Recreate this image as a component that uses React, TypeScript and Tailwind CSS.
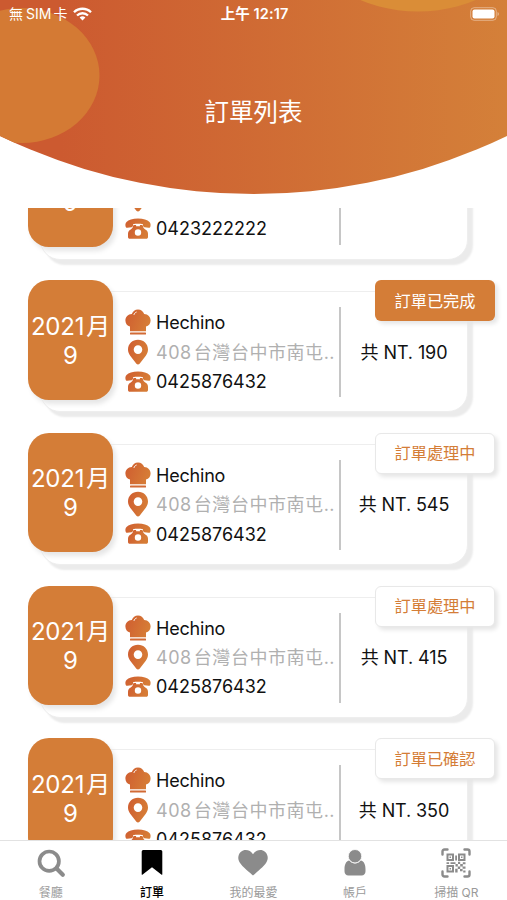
import React from "react";

type Order = { name: string; phone: string; price: string; status: string; done?: boolean };

const orders: Order[] = [
  { name: "Hechino", phone: "0423222222", price: "190", status: "訂單處理中" },
  { name: "Hechino", phone: "0425876432", price: "190", status: "訂單已完成", done: true },
  { name: "Hechino", phone: "0425876432", price: "545", status: "訂單處理中" },
  { name: "Hechino", phone: "0425876432", price: "415", status: "訂單處理中" },
  { name: "Hechino", phone: "0425876432", price: "350", status: "訂單已確認" },
];

function ChefHat() {
  return (
    <svg width="26" height="26" viewBox="0 0 26 26" className="mb-[2px] block">
      <path
        fill="url(#warm)"
        d="M5 22.300V17.600C2.200 17 .4 14.600.4 11.600.4 8 3 5 6.800 5 7.800 2.200 10 .4 13 .4s5.200 1.800 6.200 4.600c3.800 0 6.400 3 6.400 6.600 0 3-1.800 5.400-4.600 6v4.700z"
      />
      <rect x="5" y="23.500" width="16" height="2" rx=".5" fill="#d26a35" />
      <path d="M9 5.600c.4-1.300 1.200-2.100 2.300-2.500" stroke="#fff" strokeWidth=".9" fill="none" strokeLinecap="round" />
    </svg>
  );
}

function Pin() {
  return (
    <svg width="26" height="26" viewBox="0 0 26 26" className="mb-[2px] block">
      <path
        fill="url(#warm)"
        fillRule="evenodd"
        d="M13 .8C7.400.8 3 5 3 10.400c0 2.400.9 4.300 2.200 6.300l6.200 8.100c.8 1 2.400 1 3.200 0l6.200-8.100c1.300-2 2.200-3.900 2.200-6.300C23 5 18.600.8 13 .8zm0 5.500a4.300 4.300 0 1 1 0 8.600 4.300 4.300 0 0 1 0-8.600z"
      />
    </svg>
  );
}

function Phone() {
  return (
    <svg width="26" height="26" viewBox="0 0 26 26" className="mb-[1px] block">
      <path
        fill="url(#warm)"
        d="M13 2.600C7.500 2.600 3.600 3.800 1.500 6.100.3 7.400.2 9 .6 10.600c.2.900.8 1.300 1.700 1.200l4.200-.6c.9-.1 1.500-.7 1.500-1.600V8.300C9.400 7.900 11.100 7.800 13 7.800s3.600.1 5 .5v1.300c0 .9.6 1.500 1.500 1.600l4.200.6c.9.100 1.500-.3 1.700-1.200.4-1.600.3-3.200-.9-4.500C22.400 3.800 18.500 2.600 13 2.600z"
      />
      <path
        fill="url(#warm)"
        fillRule="evenodd"
        d="M9.600 8.900h1.500v1.400h3.800V8.900h1.500c1 0 1.500.5 1.600 1.400.2 1.500.9 2.300 2.300 3.100 1.800 1.100 2.700 2.400 2.700 4.400v3.200c0 1.100-.7 1.800-1.800 1.800H4.800c-1.100 0-1.800-.7-1.800-1.800v-3.200c0-2 .9-3.300 2.700-4.400 1.400-.8 2.100-1.600 2.300-3.100.1-.9.600-1.400 1.600-1.400zM13 13.300a3.200 3.200 0 1 0 0 6.400 3.200 3.200 0 0 0 0-6.400z"
      />
    </svg>
  );
}

function OrderRow({ order }: { order: Order }) {
  return (
    <li className="relative h-[152.700px] shrink-0 pt-[11px] pl-[40px]">
      <div className="flex h-[121px] w-[428px] rounded-[20px] border border-[#eeeeee] bg-white shadow-[5px_5px_2px_#ebebeb]">
        <div className="ml-[84px] flex w-[214px] flex-col pt-[16.300px]">
          <div className="flex h-[29.400px] items-center gap-[5px]">
            <ChefHat />
            <span className="text-[18px] leading-none tracking-[-0.200px] text-[#111]">{order.name}</span>
          </div>
          <div className="flex h-[29.400px] items-center gap-[5px]">
            <Pin />
            <span className="whitespace-nowrap text-[18px] leading-none tracking-[0.550px] text-[#b0b0b0]">
              408<span className="ml-[2px]">台灣台中市南屯..</span>
            </span>
          </div>
          <div className="flex h-[29.400px] items-center gap-[5px]">
            <Phone />
            <span className="text-[18px] leading-none text-[#111]">{order.phone}</span>
          </div>
        </div>
        <div className="mt-[15px] h-[90px] w-[2px] bg-[#c6c6c6]" />
        <div className="flex flex-1 items-center justify-center pt-[2px]">
          <span className="whitespace-nowrap text-[18px] leading-none tracking-[-0.100px] text-[#111]">
            共 NT. {order.price}
          </span>
        </div>
      </div>
      <div className="absolute top-0 left-[28px] flex h-[119.500px] w-[85px] flex-col items-center justify-center rounded-[21px] bg-[#d47d37] pt-px text-[24px] leading-[29px] text-white shadow-[3px_4px_5px_#e6e6e6]">
        <span className="whitespace-nowrap tracking-[-0.200px]">
          2021<span className="ml-[2px]">月</span>
        </span>
        <span>9</span>
      </div>
      <div
        className={
          order.done
            ? "absolute top-0 left-[375px] flex h-[41px] w-[120px] items-center justify-center rounded-[6px] bg-[#d47d37] text-[16.200px] text-white shadow-[3px_3px_4px_#e6e6e6]"
            : "absolute top-0 left-[375px] flex h-[41px] w-[120px] items-center justify-center rounded-[6px] border border-[#e8e8e8] bg-white text-[16.200px] text-[#d47d37] shadow-[3px_3px_4px_#e6e6e6]"
        }
      >
        {order.status}
      </div>
    </li>
  );
}

function SearchIcon() {
  return (
    <svg width="30" height="30" viewBox="0 0 30 30" fill="none" stroke="#8b8b8b" strokeLinecap="round">
      <circle cx="13.200" cy="13.200" r="9.700" strokeWidth="3.700" />
      <path d="M20.800 20.800l6 6" strokeWidth="4.200" />
    </svg>
  );
}

function BookmarkIcon() {
  return (
    <svg width="30" height="30" viewBox="0 0 30 30">
      <path d="M6.200 2h17.600q1.500 0 1.500 1.500V26.200q0 1-1 .4L15 19.300 5.700 26.600q-1 .6-1-.4V3.500Q4.700 2 6.200 2z" fill="#000" />
    </svg>
  );
}

function HeartIcon() {
  return (
    <svg width="30" height="30" viewBox="0 0 30 30">
      <path
        d="M15 27.500C12.700 25.500 4 18.500 1.700 14.600.3 12.200 0 10 .5 7.900 1.300 4.500 4.200 2 7.700 2c3 0 5.700 1.600 7.300 4.200C16.600 3.600 19.300 2 22.300 2c3.500 0 6.400 2.500 7.200 5.900.5 2.100.2 4.300-1.200 6.700C26 18.500 17.300 25.500 15 27.500z"
        fill="#8b8b8b"
      />
    </svg>
  );
}

function PersonIcon() {
  return (
    <svg width="30" height="30" viewBox="0 0 30 30" fill="#8b8b8b">
      <path d="M9.300 12.600c1.500 1.900 3.500 2.900 5.700 2.900s4.200-1 5.700-2.900c3.400.6 4.800 4.200 4.800 8.800v1.800c0 2.500-1.500 4.200-4 4.200h-13c-2.500 0-4-1.700-4-4.200v-1.800c0-4.600 1.400-8.200 4.800-8.800z" />
      <circle cx="15" cy="8.200" r="6.700" stroke="#fff" strokeWidth=".8" />
    </svg>
  );
}

function QrScanIcon() {
  return (
    <svg width="30" height="30" viewBox="0 0 30 30" fill="none" stroke="#8b8b8b">
      <g strokeWidth="2.400" strokeLinecap="round">
        <path d="M1.500 6.500v-3q0-2 2-2h3" />
        <path d="M23.500 1.500h3q2 0 2 2v3" />
        <path d="M28.500 23.500v3q0 2-2 2h-3" />
        <path d="M6.500 28.500h-3q-2 0-2-2v-3" />
      </g>
      <g strokeWidth="2">
        <rect x="6.500" y="6.500" width="5.500" height="5.500" />
        <rect x="18" y="6.500" width="5.500" height="5.500" />
        <rect x="6.500" y="18" width="5.500" height="5.500" />
      </g>
      <g fill="#8b8b8b" stroke="none">
        <path d="M8.500 8.500H10V10H8.500zM20 8.500h1.500V10H20zM8.500 20H10v1.500H8.500z" />
        <path d="M14.200 7.500h1.800v5h-1.800zM5.500 14.200h2.600V16H5.500zM9.500 14.200h5v1.800h-5zM14.500 16h2.300v2.400h-2.300zM17 13.800h2.200v2.200H17zM21.800 14.200h2.700v2h-2.700zM19.200 16h2.600v2.600h-2.600zM16.800 18.600h2.400v2.300h-2.400zM14.200 20.800h2.400v3.700h-2.400zM21.600 18.600h2.900v2.200h-2.900zM19 21h2.600v2.200H19zM22.200 22.500h2.300v2h-2.300z" />
      </g>
    </svg>
  );
}

const tabs = [
  { label: "餐廳", icon: <SearchIcon /> },
  { label: "訂單", icon: <BookmarkIcon />, active: true },
  { label: "我的最愛", icon: <HeartIcon /> },
  { label: "帳戶", icon: <PersonIcon /> },
  { label: "掃描 QR", icon: <QrScanIcon /> },
];

export default function App() {
  return (
    <div className="flex h-[900px] w-[507px] flex-col overflow-hidden bg-white font-[Inter,'Noto_Sans_CJK_TC',sans-serif]">
      <svg width="0" height="0" className="absolute">
        <defs>
          <linearGradient id="warm" x1="0" y1="0" x2="1" y2="0.300">
            <stop offset="0" stopColor="#cf5c30" />
            <stop offset="1" stopColor="#d67c36" />
          </linearGradient>
        </defs>
      </svg>

      <header className="relative h-[208px] shrink-0 text-white">
        <svg width="507" height="208" viewBox="0 0 507 208" className="absolute inset-0">
          <defs>
            <linearGradient id="sky" gradientUnits="userSpaceOnUse" x1="60" y1="0" x2="507" y2="0">
              <stop offset="0" stopColor="#cc5a30" />
              <stop offset="1" stopColor="#d48039" />
            </linearGradient>
            <clipPath id="dome">
              <circle cx="253.500" cy="-389" r="583" />
            </clipPath>
          </defs>
          <g clipPath="url(#dome)">
            <rect width="507" height="208" fill="url(#sky)" />
            <ellipse cx="22" cy="75.500" rx="77.500" ry="67.500" fill="#d47a34" />
            <ellipse cx="418" cy="-56" rx="104" ry="67.500" fill="#da8d37" />
          </g>
        </svg>
        <div className="relative grid h-[28px] grid-cols-3 items-center pr-[7px] pl-[9px] text-[14px] leading-none">
          <div className="flex items-center gap-[6px]">
            <span className="whitespace-nowrap">
              無<span className="mr-[2px] ml-[3px]">SIM</span>卡
            </span>
            <svg width="19" height="14" viewBox="0 0 19 14" fill="none" stroke="#fff" strokeWidth="2.300">
              <path d="M1 5.200a12.200 12.200 0 0 1 17 0" />
              <path d="M4 8.500a7.900 7.900 0 0 1 11 0" />
              <path d="M9.500 13.600l-2.900-3a4.200 4.200 0 0 1 5.800 0z" fill="#fff" stroke="none" />
            </svg>
          </div>
          <div className="text-center text-[14.500px] font-semibold tracking-[0.100px]">上午 12:17</div>
          <div className="flex justify-end">
            <svg width="30" height="14" viewBox="0 0 30 14">
              <rect x=".7" y=".7" width="25.600" height="12.600" rx="3.500" fill="none" stroke="#fff" strokeOpacity=".4" />
              <rect x="2.500" y="2.500" width="22" height="9" rx="2" fill="#fff" />
              <path d="M27.500 5v4q1.500-.5 1.500-2t-1.500-2z" fill="#fff" fillOpacity=".4" />
            </svg>
          </div>
        </div>
        <h1 className="relative pt-[66px] text-center text-[24.500px] leading-[36px]">訂單列表</h1>
      </header>

      <main className="min-h-0 flex-1 overflow-hidden">
        <ul className="-mt-[80.400px] flex flex-col">
          {orders.map((o, i) => (
            <OrderRow key={i} order={o} />
          ))}
        </ul>
      </main>

      <nav className="grid h-[60px] shrink-0 grid-cols-5 border-t border-[#e2e2e2] bg-white">
        {tabs.map((t) => (
          <div key={t.label} className="flex flex-col items-center pt-[7px]">
            {t.icon}
            <span
              className={
                t.active
                  ? "mt-[8px] text-[12px] leading-[14px] font-medium text-black"
                  : "mt-[8px] text-[12px] leading-[14px] text-[#9a9a9a]"
              }
            >
              {t.label}
            </span>
          </div>
        ))}
      </nav>
    </div>
  );
}
